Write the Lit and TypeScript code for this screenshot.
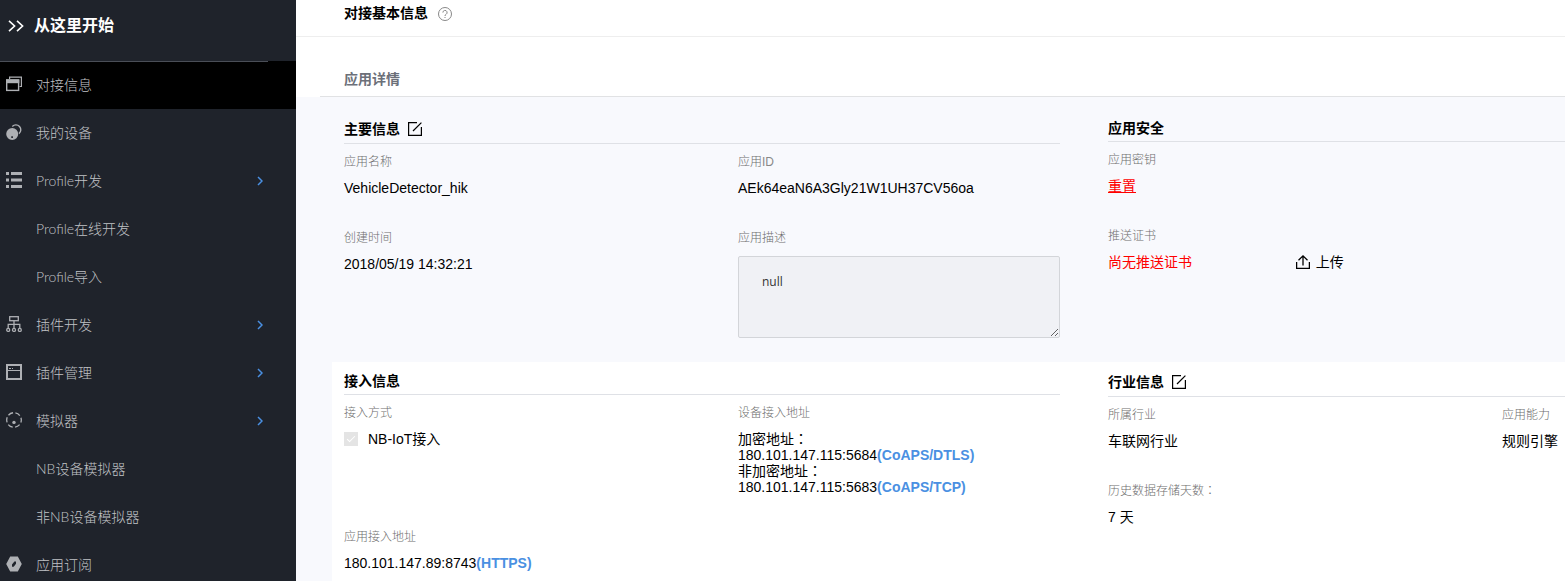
import { LitElement, html, svg, css, nothing, TemplateResult } from "lit";
import { customElement, property, state } from "lit/decorators.js";
import { classMap } from "lit/directives/class-map.js";

const icon = (size: number, body: TemplateResult, name = "icon") =>
  html`<svg class=${name} width=${size} height=${size} viewBox="0 0 ${size} ${size}" aria-hidden="true">${body}</svg>`;

const icons: Record<string, TemplateResult> = {
  windows: icon(16, svg`
    <path d="M3.600 3V1.100h11.800v9.400H13.500" fill="none" stroke="currentColor" stroke-width="1.200" />
    <rect x=".7" y="4" width="11.900" height="10.400" fill="none" stroke="currentColor" stroke-width="1.400" />
    <path d="M0 3.400h13.300v3.800H0z" fill="currentColor" />`),
  device: icon(16, svg`
    <path fill="currentColor" fill-rule="evenodd" d="M6.200 4a6 6 0 1 1 0 12 6 6 0 0 1 0-12zm-.9 8.200v1.800h1.600v-1.800z" />
    <path d="M6.300 2.400a4.900 4.900 0 1 1 6.600 7.200" fill="none" stroke="currentColor" stroke-width="1.400" />`),
  list: icon(16, svg`
    <path fill="currentColor" d="M0 0h3v3H0zM5 0h11v3H5zM0 6.500h3v3H0zM5 6.500h11v3H5zM0 13h3v3H0zM5 13h11v3H5z" />`),
  tree: icon(16, svg`
    <g fill="none" stroke="currentColor" stroke-width="1.300">
      <rect x="3.700" y=".7" width="8.600" height="4" />
      <path d="M8 4.700v7.400M2.200 12V8.400h11.600V12" />
      <circle cx="2.200" cy="13.900" r="1.500" /><circle cx="8" cy="13.900" r="1.500" /><circle cx="13.800" cy="13.900" r="1.500" />
    </g>`),
  panel: icon(16, svg`
    <rect x="1" y="1" width="14" height="14" fill="none" stroke="currentColor" stroke-width="2" />
    <path d="M1 6.500h14" stroke="currentColor" />
    <path d="M3 4.500h2M6 4.500h1" stroke="currentColor" />`),
  simulator: icon(16, svg`
    <circle cx="8" cy="8" r="7.300" fill="none" stroke="currentColor" stroke-width="1.300" stroke-dasharray="5.200 2.445" stroke-dashoffset="2.600" />
    <circle cx="8" cy="10.400" r="1.700" fill="currentColor" />`),
  hexagon: icon(16, svg`
    <path fill="currentColor" fill-rule="evenodd" d="M4.200.4h7.600L15.800 8l-4 7.600H4.200L.2 8zM8.400 5.500 6 8.600v2.200h1.700L10 7.700V5.500z" />`),
  start: html`<svg width="16" height="12" viewBox="0 0 16 12" aria-hidden="true">
    <path d="M1 .8 6.600 6 1 11.200M9 .8 14.600 6 9 11.200" fill="none" stroke="currentColor" stroke-width="1.600" />
  </svg>`,
  arrow: html`<svg width="6" height="10" viewBox="0 0 6 10" aria-hidden="true">
    <path d="M1 1l4 4-4 4" fill="none" stroke="#4a90e2" stroke-width="1.500" />
  </svg>`,
  edit: icon(14, svg`
    <path d="M9 .6H.6v12.800h12.800V5" fill="none" stroke="currentColor" stroke-width="1.200" />
    <path d="M5 9 13.400.6" stroke="currentColor" stroke-width="1.200" />`),
  upload: icon(14, svg`
    <path d="M.6 7v6.300h12.800V7" fill="none" stroke="currentColor" stroke-width="1.300" />
    <path d="M7 10.500V1M2.500 5.200 7 .9l4.500 4.300" fill="none" stroke="currentColor" stroke-width="1.300" />`),
  help: icon(14, svg`
    <circle cx="7" cy="7" r="6.500" fill="none" stroke="currentColor" />
    <path d="M4.900 5.600a2.100 2.100 0 1 1 3.200 1.700C7.300 7.800 7 8.100 7 9" fill="none" stroke="currentColor" />
    <path d="M6.500 10h1v1h-1z" fill="currentColor" />`),
};

interface NavEntry {
  label: string;
  icon?: string;
  expandable?: boolean;
}

const NAV: NavEntry[] = [
  { label: "对接信息", icon: "windows" },
  { label: "我的设备", icon: "device" },
  { label: "Profile开发", icon: "list", expandable: true },
  { label: "Profile在线开发" },
  { label: "Profile导入" },
  { label: "插件开发", icon: "tree", expandable: true },
  { label: "插件管理", icon: "panel", expandable: true },
  { label: "模拟器", icon: "simulator", expandable: true },
  { label: "NB设备模拟器" },
  { label: "非NB设备模拟器" },
  { label: "应用订阅", icon: "hexagon" },
];

@customElement("side-nav")
class SideNav extends LitElement {
  @state() private active = 0;

  static styles = css`
    :host {
      display: block;
      overflow: hidden;
      background: #1f232b;
      color: #aeb0b4;
      font-size: 14px;
      font-weight: 300;
    }
    .start {
      display: flex;
      align-items: center;
      gap: 10px;
      width: 100%;
      height: 51px;
      padding: 0 8px;
      border: 0;
      background: none;
      color: #fff;
      font: inherit;
      font-size: 16px;
      font-weight: 700;
      cursor: pointer;
    }
    .list {
      margin: 10px 0 0;
      padding: 0;
      list-style: none;
    }
    .list::before {
      content: "";
      display: block;
      position: relative;
      height: 1px;
      margin: 0 28px -1px 0;
      background: #4a4e57;
    }
    .item {
      display: flex;
      align-items: center;
      box-sizing: border-box;
      width: 100%;
      height: 48px;
      padding: 0 33px 0 6px;
      border: 0;
      background: none;
      color: inherit;
      font: inherit;
      font-family: Lato, "Noto Sans CJK SC", sans-serif;
      text-align: left;
      text-decoration: none;
      cursor: pointer;
    }
    .item.active {
      background: #000;
    }
    .glyph {
      display: flex;
      width: 30px;
      padding-bottom: 2px;
    }
    .label {
      flex: 1;
      color: #c0c2c6;
    }
  `;

  private entry(e: NavEntry, i: number) {
    const cls = classMap({ item: true, active: i === this.active });
    const body = html`
      <span class="glyph">${e.icon ? icons[e.icon] : nothing}</span>
      <span class="label">${e.label}</span>
      ${e.expandable ? icons.arrow : nothing}
    `;
    return e.expandable
      ? html`<li><button type="button" class=${cls} aria-expanded="true">${body}</button></li>`
      : html`<li><a href="#" class=${cls} @click=${() => (this.active = i)}>${body}</a></li>`;
  }

  render() {
    return html`
      <button type="button" class="start">${icons.start}<span>从这里开始</span></button>
      <nav><ul class="list">${NAV.map((e, i) => this.entry(e, i))}</ul></nav>
    `;
  }
}

@customElement("info-section")
class InfoSection extends LitElement {
  @property() heading = "";
  @property({ type: Boolean }) editable = false;

  static styles = css`
    :host {
      display: block;
      min-width: 0;
    }
    .head {
      display: flex;
      align-items: center;
      gap: 8px;
      margin: 0 0 10px;
      padding-bottom: 6px;
      border-bottom: 1px solid #dfe1e6;
    }
    .title {
      margin: 0;
      font-size: 14px;
      line-height: 14px;
      font-weight: 700;
      color: #000;
    }
    .edit {
      display: flex;
      padding: 1px 0;
      border: 0;
      background: none;
      color: #000;
      cursor: pointer;
    }
  `;

  render() {
    return html`
      <div class="head">
        <h3 class="title">${this.heading}</h3>
        ${this.editable
          ? html`<button type="button" class="edit" aria-label="编辑">${icons.edit}</button>`
          : nothing}
      </div>
      <slot></slot>
    `;
  }
}

@customElement("app-root")
class AppRoot extends LitElement {
  static styles = css`
    :host {
      display: grid;
      grid-template-columns: 296px minmax(0, 1fr);
      height: 100vh;
      overflow: hidden;
      font-family: "Liberation Sans", "Noto Sans CJK SC", sans-serif;
      font-size: 14px;
      line-height: 16px;
      color: #000;
      background: #fff;
    }
    .main {
      overflow: auto;
      scrollbar-width: none;
      background: #f8f9fd;
    }
    .top {
      display: flex;
      align-items: center;
      gap: 10px;
      padding: 4px 48px 14px;
      border-bottom: 1px solid #eee;
      background: #fff;
    }
    .page-title {
      margin: 0;
      font-size: 14px;
      line-height: 18px;
      font-weight: 700;
    }
    .help {
      display: flex;
      padding: 1px 0 0;
      border: 0;
      background: none;
      color: #888;
      cursor: pointer;
    }
    .tabs {
      padding-left: 24px;
      background: #fff;
    }
    .tab {
      margin: 0;
      padding: 34px 24px 9px;
      border-bottom: 1px solid #e1e2e4;
      font-size: 14px;
      line-height: 16px;
      font-weight: 700;
      color: #6c7079;
    }
    .band {
      display: grid;
      grid-template-columns: minmax(0, 716fr) minmax(0, 457fr);
      column-gap: 48px;
      padding: 24px 0 24px 48px;
    }
    .card {
      margin-left: 36px;
      padding: 12px 0 24px 12px;
      background: #fff;
    }
    .fields {
      display: grid;
      grid-template-columns: minmax(0, 1fr) minmax(0, 1fr);
      gap: 34px 72px;
      margin: 0;
    }
    .fields.side {
      grid-template-columns: minmax(0, 322fr) minmax(56px, 63fr);
    }
    .field {
      display: flex;
      flex-direction: column;
      gap: 10px;
      min-width: 0;
    }
    .label {
      font-size: 12px;
      line-height: 16px;
      font-weight: 300;
      color: #6e6e6e;
    }
    .latin {
      color: #888;
    }
    .colon {
      font-family: "Noto Sans CJK TC", sans-serif;
      line-height: 0;
    }
    .value {
      margin: 0;
      line-height: 16px;
    }
    .description {
      box-sizing: border-box;
      width: 100%;
      height: 82px;
      margin: 0;
      padding: 16px 23px;
      border: 1px solid #d3d5d9;
      border-radius: 2px;
      background: #f0f1f5;
      color: #333;
      font-family: "Open Sans", "Noto Sans", sans-serif;
      font-size: 12px;
      line-height: 18px;
      resize: both;
    }
    .check {
      display: flex;
      align-items: center;
      gap: 10px;
    }
    .box {
      appearance: none;
      display: grid;
      place-items: center;
      width: 14px;
      height: 14px;
      margin: 0;
      background: #e4e4e4;
    }
    .box::after {
      content: "";
      width: 7px;
      height: 3px;
      margin-bottom: 2px;
      border: solid #fff;
      border-width: 0 0 1px 1px;
      transform: rotate(-45deg);
    }
    .protocol {
      color: #4a90e2;
    }
    .reset {
      color: #f00;
      text-underline-offset: 1px;
    }
    .missing {
      color: #f00;
    }
    .certificate {
      display: grid;
      grid-template-columns: 7fr 5fr;
    }
    .upload {
      display: flex;
      align-items: center;
      gap: 6px;
      padding: 0;
      border: 0;
      background: none;
      color: #000;
      font: inherit;
      cursor: pointer;
    }
  `;

  private field(label: unknown, value: unknown) {
    return html`<div class="field">
      <span class="label">${label}</span>
      <div class="value">${value}</div>
    </div>`;
  }

  render() {
    const colon = html`<span class="colon">：</span>`;
    return html`
      <side-nav></side-nav>
      <main class="main">
        <header class="top">
          <h1 class="page-title">对接基本信息</h1>
          <button type="button" class="help" aria-label="帮助">${icons.help}</button>
        </header>
        <div class="tabs"><h2 class="tab">应用详情</h2></div>

        <div class="band">
          <info-section heading="主要信息" editable>
            <div class="fields">
              ${this.field("应用名称", "VehicleDetector_hik")}
              ${this.field(html`应用<b class="latin">ID</b>`, "AEk64eaN6A3Gly21W1UH37CV56oa")}
              ${this.field("创建时间", "2018/05/19 14:32:21")}
              <div class="field">
                <label class="label" for="description">应用描述</label>
                <textarea class="description" id="description" readonly .value=${"null"}></textarea>
              </div>
            </div>
          </info-section>
          <info-section heading="应用安全">
            <div class="fields side">
              ${this.field("应用密钥", html`<a class="reset" href="#">重置</a>`)}
              <span></span>
              ${this.field("推送证书", html`<div class="certificate">
                <span class="missing">尚无推送证书</span>
                <button type="button" class="upload">${icons.upload}<span>上传</span></button>
              </div>`)}
            </div>
          </info-section>
        </div>

        <div class="band card">
          <info-section heading="接入信息">
            <div class="fields">
              ${this.field("接入方式", html`<label class="check">
                <input class="box" type="checkbox" checked disabled />NB-IoT接入
              </label>`)}
              ${this.field("设备接入地址", html`
                <div>加密地址${colon}</div>
                <div>180.101.147.115:5684<b class="protocol">(CoAPS/DTLS)</b></div>
                <div>非加密地址${colon}</div>
                <div>180.101.147.115:5683<b class="protocol">(CoAPS/TCP)</b></div>`)}
              ${this.field("应用接入地址", html`180.101.147.89:8743<b class="protocol">(HTTPS)</b>`)}
            </div>
          </info-section>
          <info-section heading="行业信息" editable>
            <div class="fields side">
              ${this.field("所属行业", "车联网行业")}
              ${this.field("应用能力", "规则引擎")}
              ${this.field(html`历史数据存储天数${colon}`, "7 天")}
            </div>
          </info-section>
        </div>
      </main>
    `;
  }
}
